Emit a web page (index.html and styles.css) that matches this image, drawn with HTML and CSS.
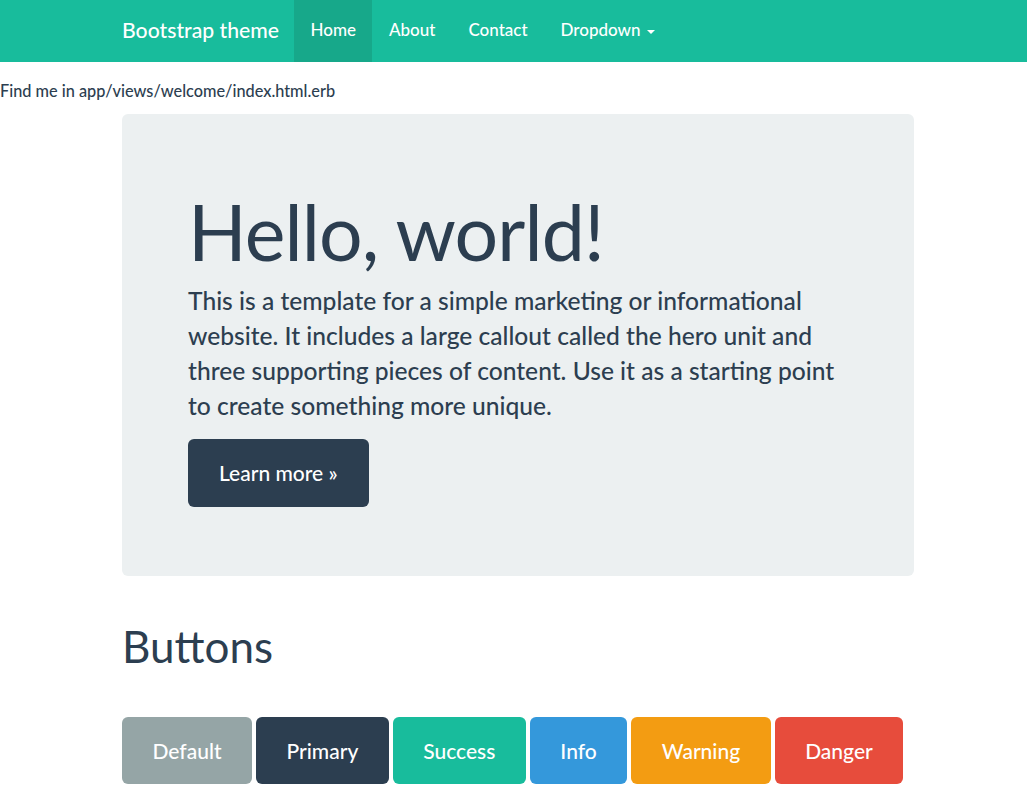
FILE: index.html
```html
<!DOCTYPE html>
<html lang="en">
<head>
<meta charset="utf-8">
<title>Bootstrap theme</title>
<link rel="stylesheet" href="styles.css">
</head>
<body>
<nav class="navbar">
  <div class="nav-container">
    <a class="brand" href="#">Bootstrap theme</a>
    <ul class="nav">
      <li class="active"><a href="#">Home</a></li>
      <li><a href="#">About</a></li>
      <li><a href="#">Contact</a></li>
      <li><a href="#">Dropdown <span class="caret"></span></a></li>
    </ul>
  </div>
</nav>
<p class="find">Find me in app/views/welcome/index.html.erb</p>
<div class="container">
  <div class="jumbotron">
    <h1 class="hero-title">Hello, world!</h1>
    <p class="hero-text">This is a template for a simple marketing or informational website. It includes a large callout called the hero unit and three supporting pieces of content. Use it as a starting point to create something more unique.</p>
    <a class="btn btn-lg btn-primary" href="#">Learn more &raquo;</a>
  </div>
  <h1 class="section-title">Buttons</h1>
  <div class="btn-row">
    <button class="btn btn-default">Default</button>
    <button class="btn btn-primary">Primary</button>
    <button class="btn btn-success">Success</button>
    <button class="btn btn-info">Info</button>
    <button class="btn btn-warning">Warning</button>
    <button class="btn btn-danger">Danger</button>
  </div>
</div>
</body>
</html>
```
FILE: styles.css
```css
html, body {
  margin: 0;
  padding: 0;
}
body {
  font-family: Lato, "Open Sans", sans-serif;
  font-size: 16px;
  font-weight: 500;
  color: #2c3e50;
  background: #fff;
}
a { text-decoration: none; }

.navbar {
  background: #18bc9c;
  height: 62px;
}
.nav-container {
  margin-left: 107px;
  display: flex;
  height: 100%;
}
.brand {
  color: #fff;
  font-size: 21.2px;
  line-height: 60px;
  padding: 0 15px;
}
.nav {
  list-style: none;
  margin: 0;
  padding: 0;
  display: flex;
}
.nav li a {
  display: block;
  color: #fff;
  font-size: 17px;
  line-height: 60px;
  height: 62px;
  padding: 0 16.5px;
}
.nav li.active a {
  background: #17a88a;
}
.caret {
  display: inline-block;
  width: 0;
  height: 0;
  margin-left: 2px;
  vertical-align: middle;
  border-top: 4px solid #fff;
  border-left: 4px solid transparent;
  border-right: 4px solid transparent;
}

.find {
  margin: 18px 0 13px;
  font-size: 16.3px;
  line-height: 21px;
}

.container {
  margin-left: 122px;
  width: 792px;
}
.jumbotron {
  background: #ecf0f1;
  border-radius: 6px;
  padding: 48px 66px 69px;
}
.hero-title {
  margin: 31px 0 13px;
  font-size: 77px;
  line-height: 77px;
  font-weight: 400;
  letter-spacing: -0.9px;
}
.hero-text {
  margin: 0 0 16px;
  font-size: 24.6px;
  line-height: 35px;
}
.btn {
  display: inline-block;
  border: 0;
  color: #fff;
  font-family: inherit;
  font-weight: 500;
  font-size: 21px;
  line-height: 67px;
  padding: 0 30.5px;
  border-radius: 6px;
  cursor: pointer;
}
.btn-lg {
  line-height: 68px;
  padding: 0 31px;
}
.section-title {
  margin: 47px 0 48px;
  font-size: 44px;
  line-height: 46px;
  font-weight: 400;
}
.btn-row {
  display: flex;
  gap: 4px;
}
.btn-default { background: #95a5a6; }
.btn-primary { background: #2c3e50; }
.btn-success { background: #18bc9c; }
.btn-info { background: #3498db; }
.btn-warning { background: #f39c12; }
.btn-danger { background: #e74c3c; }
```
